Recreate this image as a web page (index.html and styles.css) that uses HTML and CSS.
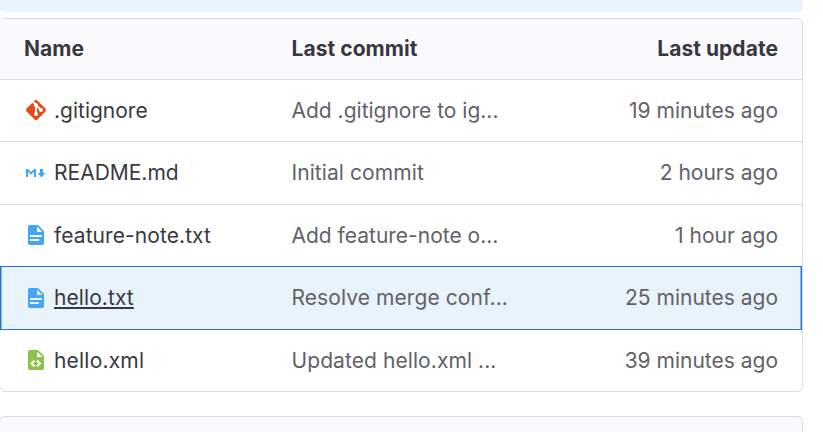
FILE: index.html
```html
<!DOCTYPE html>
<html lang="en">
<head>
<meta charset="utf-8">
<title>Files</title>
<link rel="stylesheet" href="styles.css">
</head>
<body>
<div class="banner"></div>
<div class="files">
  <div class="row head"><span class="name">Name</span><span class="commit">Last commit</span><span class="date">Last update</span></div>
  <div class="row">
    <span class="name"><svg class="icon" viewBox="0 0 24 24"><path fill="#e64a19" d="M2.6 10.59 8.38 4.8l1.69 1.7c-.24.85.15 1.78.93 2.23v5.54c-.6.34-1 .99-1 1.73a2 2 0 0 0 4 0c0-.74-.4-1.39-1-1.73V9.41l2.07 2.09c-.07.15-.07.32-.07.5a2 2 0 1 0 2-2c-.18 0-.35 0-.5.07L13.93 7.5a1.98 1.98 0 0 0-1.15-2.34c-.43-.16-.88-.2-1.28-.09L9.8 3.38l.79-.78c.78-.79 2.04-.79 2.82 0l7.99 7.99c.79.78.79 2.04 0 2.82l-7.99 7.99c-.78.79-2.04.79-2.82 0L2.6 13.41c-.79-.78-.79-2.04 0-2.82z"/></svg><a>.gitignore</a></span>
    <span class="commit">Add .gitignore to ig...</span><span class="date">19 minutes ago</span>
  </div>
  <div class="row even">
    <span class="name"><svg class="icon" viewBox="0 0 24 24"><path fill="#42a5f5" d="M2 16V8h2l3 3 3-3h2v8h-2v-5.17l-3 3-3-3V16H2m14-8h3v4h2.5l-4 4.5-4-4.5H16V8z"/></svg><a>README.md</a></span>
    <span class="commit wide">Initial commit</span><span class="date">2 hours ago</span>
  </div>
  <div class="row">
    <span class="name"><svg class="icon" viewBox="0 0 24 24"><path fill="#42a5f5" d="M13 9h5.5L13 3.5V9M6 2h8l6 6v12a2 2 0 0 1-2 2H6a2 2 0 0 1-2-2V4c0-1.11.89-2 2-2m9 16v-2H6v2h9m3-4v-2H6v2h12z"/></svg><a class="wide">feature-note.txt</a></span>
    <span class="commit">Add feature-note o...</span><span class="date">1 hour ago</span>
  </div>
  <div class="row selected even">
    <span class="name"><svg class="icon" viewBox="0 0 24 24"><path fill="#42a5f5" d="M13 9h5.5L13 3.5V9M6 2h8l6 6v12a2 2 0 0 1-2 2H6a2 2 0 0 1-2-2V4c0-1.11.89-2 2-2m9 16v-2H6v2h9m3-4v-2H6v2h12z"/></svg><a class="wide">hello.txt</a></span>
    <span class="commit wide">Resolve merge conf...</span><span class="date">25 minutes ago</span>
  </div>
  <div class="row">
    <span class="name"><svg class="icon" viewBox="0 0 24 24"><path fill="#8bc34a" d="M13 9h5.5L13 3.5V9M6 2h8l6 6v12a2 2 0 0 1-2 2H6a2 2 0 0 1-2-2V4c0-1.11.89-2 2-2m.12 13.5 3.74 3.74 1.42-1.41-2.33-2.33 2.33-2.33-1.42-1.41-3.74 3.74m11.16 0-3.74-3.74-1.42 1.41 2.33 2.33-2.33 2.33 1.42 1.41 3.74-3.74z"/></svg><a class="wider">hello.xml</a></span>
    <span class="commit wide">Updated hello.xml ...</span><span class="date">39 minutes ago</span>
  </div>
</div>
<div class="panel"></div>
</body>
</html>
```
FILE: styles.css
```css
* { box-sizing: border-box; }
body {
  margin: 0;
  height: 432px;
  overflow: hidden;
  background: #fff;
  color: #3a383f;
  font: 400 21px/30px Inter, "Liberation Sans", sans-serif;
}
.banner {
  width: 804px;
  height: 12px;
  margin: 0 0 6px -1px;
  background: #e9f3fc;
  border-radius: 0 0 6px 6px;
}
.files {
  width: 804px;
  height: 374px;
  margin-left: -1px;
  border: 1px solid #dcdcde;
  border-radius: 6px;
  overflow: hidden;
  display: grid;
  grid-template-rows: 61px 62px 63px 61px 64px 61px;
}
.row {
  display: grid;
  grid-template-columns: 267.5px 260px 1fr;
  align-items: center;
  padding: 0 24px;
  border-bottom: 1px solid #dcdcde;
  white-space: nowrap;
}
.row:last-child, .row:nth-child(4) { border-bottom: 0; }
.head { background: #fbfafd; font-weight: 700; letter-spacing: 0.05px; }
.selected {
  background: #e9f3fc;
  border: 1px solid #1f75cb;
  box-shadow: inset 1px 0 #8fbae5, inset -1px 0 #8fbae5;
  padding: 0 23px;
}
.name { display: flex; align-items: center; }
.icon { width: 24px; height: 24px; margin: 0 6px 1px 0; flex: none; }
.even .icon { margin-bottom: 0; }
.commit, .date { color: #626168; }
.date { text-align: right; }
.head .commit, .head .date { color: #3a383f; }
.wide { letter-spacing: 0.08px; }
.wider { letter-spacing: 0.2px; }
.selected .name a {
  text-decoration: underline;
  text-decoration-thickness: 2px;
  text-underline-offset: 2px;
  text-decoration-skip-ink: none;
}
.panel {
  width: 804px;
  height: 16px;
  margin: 24px 0 0 -1px;
  border: 1px solid #dcdcde;
  border-bottom: 0;
  border-radius: 6px 6px 0 0;
  background: #fbfafd;
}
```
